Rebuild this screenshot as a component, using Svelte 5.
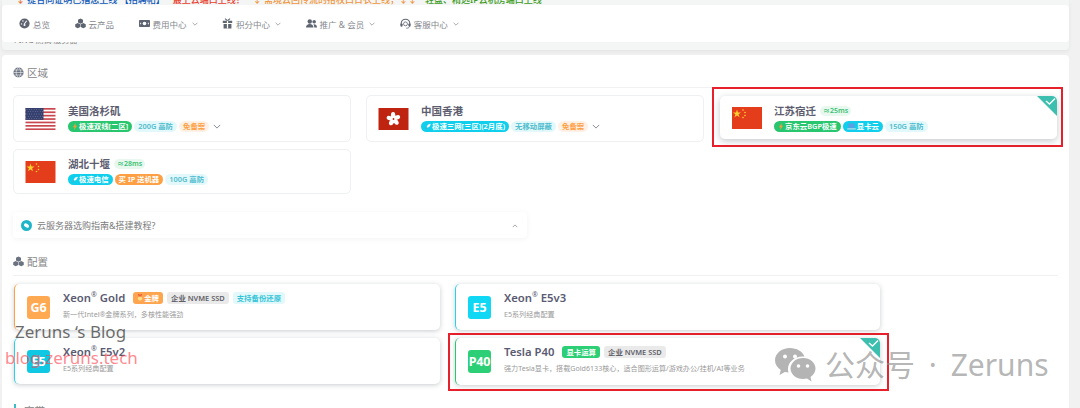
<script>
  const nav = [
    { t: '总览', i: 'dash' },
    { t: '云产品', i: 'cubes' },
    { t: '费用中心', i: 'money', c: true },
    { t: '积分中心', i: 'gift', c: true },
    { t: '推广 & 会员', i: 'users', c: true },
    { t: '客服中心', i: 'head', c: true }
  ];
  const stars = [];
  for (let r = 0; r < 5; r++) for (let c = 0; c < 7; c++) stars.push({ x: 1.5 + c * 2.4 + (r % 2) * 1.2, y: 1.4 + r * 2.3 });
</script>

{#snippet cn()}
  <svg class="flag" viewBox="0 0 30 22"><rect width="30" height="22" fill="#e43d1c"/><polygon points="5,2.5 6,5.500 9,5.500 6.600,7.300 7.500,10.300 5,8.500 2.500,10.300 3.400,7.300 1,5.500 4,5.500" fill="#fbd130"/><circle cx="11" cy="3" r=".8" fill="#fbd130"/><circle cx="13" cy="5.500" r=".8" fill="#fbd130"/><circle cx="13" cy="8.500" r=".8" fill="#fbd130"/><circle cx="11" cy="10.500" r=".8" fill="#fbd130"/></svg>
{/snippet}
{#snippet us()}
  <svg class="flag" viewBox="0 0 30 22"><rect width="30" height="22" fill="#fff"/><g fill="#c9474f"><rect width="30" height="1.700"/><rect y="3.400" width="30" height="1.700"/><rect y="6.800" width="30" height="1.700"/><rect y="10.200" width="30" height="1.700"/><rect y="13.600" width="30" height="1.700"/><rect y="17" width="30" height="1.700"/><rect y="20.400" width="30" height="1.600"/></g><rect width="18" height="11.900" fill="#35406e"/>{#each stars as s}<circle cx={s.x} cy={s.y} r=".4" fill="#9aa3c4"/>{/each}</svg>
{/snippet}
{#snippet hk()}
  <svg class="flag" viewBox="0 0 30 22"><rect width="30" height="22" fill="#bf2411"/><g fill="#fff"><ellipse cx="14.600" cy="7.400" rx="2.200" ry="3.400"/><ellipse cx="14.600" cy="7.400" rx="2.200" ry="3.400" transform="rotate(72 15 11)"/><ellipse cx="14.600" cy="7.400" rx="2.200" ry="3.400" transform="rotate(144 15 11)"/><ellipse cx="14.600" cy="7.400" rx="2.200" ry="3.400" transform="rotate(216 15 11)"/><ellipse cx="14.600" cy="7.400" rx="2.200" ry="3.400" transform="rotate(288 15 11)"/></g><circle cx="15" cy="11" r=".9" fill="#bf2411"/></svg>
{/snippet}
{#snippet chev()}
  <svg class="chev" viewBox="0 0 10 6"><path d="M1 1l4 4 4-4" fill="none" stroke="currentColor" stroke-width="1.100"/></svg>
{/snippet}
{#snippet bolt()}
  <svg class="mini" viewBox="0 0 8 10"><path d="M5 0L1 6h2.200L2.600 10 7 4H4.600z" fill="#f59a3e"/></svg>
{/snippet}
{#snippet rocket()}
  <svg class="mini" viewBox="0 0 10 10"><path d="M9.500.5C6.500.7 4 2.500 2.800 5.500l1.700 1.700C7.500 6 9.300 3.500 9.500.5z" fill="#fff"/><path d="M2.500 6.500L.5 9.500l3-2z" fill="#f0665a"/></svg>
{/snippet}
{#snippet laptop()}
  <svg class="mini wide" viewBox="0 0 10 8"><rect x="1.500" y=".5" width="7" height="5" rx=".5" fill="#5d9fe0"/><rect y="6" width="10" height="1.500" rx=".5" fill="#c6d6e6"/></svg>
{/snippet}
{#snippet medal()}
  <svg class="mini" viewBox="0 0 8 10"><path d="M1 0h2l1 3 1-3h2L5.500 4h-3z" fill="#e8553a"/><circle cx="4" cy="6.500" r="3" fill="#ffe08a"/></svg>
{/snippet}
{#snippet icon(k)}
  <svg class="nicon" viewBox="0 0 14 14" fill="#5e6470">
    {#if k === 'dash'}<circle cx="7" cy="7" r="6.500"/><path d="M6.500 8L9.800 3.500" stroke="#fff" stroke-width="1.300"/><circle cx="3.200" cy="7.500" r=".9" fill="#fff"/><circle cx="5" cy="3.800" r=".9" fill="#fff"/><circle cx="7" cy="9" r="1.300" fill="#fff"/>
    {:else if k === 'cubes'}<path d="M7 .5l3.200 1.600v3.500L7 7.200 3.800 5.600V2.100zM3.500 6.500l3.200 1.600v3.500l-3.200 1.600L.3 11.600V8.100zM10.500 6.500l3.200 1.600v3.500l-3.200 1.600-3.200-1.600V8.100z"/>
    {:else if k === 'money'}<rect x="0" y="2.500" width="14" height="9" rx="1"/><circle cx="7" cy="7" r="2.300" fill="#fff"/><rect x="1.500" y="6" width="1.200" height="2" fill="#fff"/><rect x="11.300" y="6" width="1.200" height="2" fill="#fff"/>
    {:else if k === 'gift'}<path d="M1 3.500h12v3H1zM2 7.500h10v6H2z"/><path d="M3.800.8L7 3.500 10.200.8" fill="none" stroke="#5e6470" stroke-width="1.300"/><path d="M6.200 3.500h1.600v10H6.200z" fill="#fff"/>
    {:else if k === 'users'}<circle cx="4.800" cy="4.500" r="2.800"/><circle cx="10.400" cy="4.800" r="2.300"/><path d="M0 12c0-3 2-4.500 4.800-4.500S9.500 9 9.500 12zM10.500 12c0-1.800-.4-3-1.300-4 2.500-.5 4.800 1 4.800 4z"/>
    {:else}<path d="M1.500 8V7a5.500 5.500 0 0111 0v1" fill="none" stroke="#5e6470" stroke-width="1.300"/><rect x=".5" y="7" width="2.800" height="4" rx="1"/><rect x="10.700" y="7" width="2.800" height="4" rx="1"/><circle cx="7" cy="7.500" r="2.500" fill="none" stroke="#5e6470"/><path d="M12 11c-.5 1.500-2 2-4 2" fill="none" stroke="#5e6470"/>{/if}
  </svg>
{/snippet}
{#snippet corner()}
  <svg class="corner" viewBox="0 0 20 20"><path d="M0 0h17a3 3 0 013 3v17z" fill="#3dbfb0"/><path d="M9 5l3.500 3L18 2.500" fill="none" stroke="#fff" stroke-width="1.300"/></svg>
{/snippet}

<div class="page">
  <div class="topcard">
    <div class="notice">
      <span class="blue"><i class="arrow">↓</i> 提合同证明已指您上线 【招聘帖】</span>
      <span class="red">最上云端口上线！</span>
      <span class="orange">↓ 需境云回传流的拾权口日衣上线，↓↓</span>
      <span class="green">轻盘、精选IP云机房端口上线</span>
    </div>
    <div class="nav">
      {#each nav as n}
        <div class="navitem">{@render icon(n.i)}<span>{n.t}</span>{#if n.c}{@render chev()}{/if}</div>
      {/each}
    </div>
    <div class="under">PING 测试 服务器</div>
  </div>

  <div class="main">
    <div class="sect">
      <svg class="sicon" viewBox="0 0 14 14"><circle cx="7" cy="7" r="6.500" fill="#6b7280"/><path d="M.5 7h13M7 .5c-4 4-4 9 0 13M7 .5c4 4 4 9 0 13M1.500 3.800h11M1.500 10.200h11" fill="none" stroke="#fff" stroke-width=".7"/></svg>
      <span>区域</span>
    </div>

    <div class="regions">
      <div class="rcard">
        {@render us()}
        <div class="rbody">
          <div class="rtitle"><b>美国洛杉矶</b></div>
          <div class="tags">
            <span class="tag tgreen">{@render bolt()}极速双线[二区]</span>
            <span class="tag tcyan">200G 高防</span>
            <span class="tag tpeach">免备案</span>
            <span class="cv">{@render chev()}</span>
          </div>
        </div>
      </div>
      <div class="rcard">
        {@render hk()}
        <div class="rbody">
          <div class="rtitle"><b>中国香港</b></div>
          <div class="tags">
            <span class="tag tblue">{@render rocket()}极速三网[三区](2月底)</span>
            <span class="tag tcyan">无移动屏蔽</span>
            <span class="tag tpeach">免备案</span>
            <span class="cv">{@render chev()}</span>
          </div>
        </div>
      </div>
      <div class="rwrap">
        <div class="rcard active">
          {@render corner()}
          {@render cn()}
          <div class="rbody">
            <div class="rtitle"><b>江苏宿迁</b><span class="ping">≈25ms</span></div>
            <div class="tags">
              <span class="tag tgreen">{@render bolt()}京东云BGP极速</span>
              <span class="tag tblue">{@render laptop()}显卡云</span>
              <span class="tag tcyan">150G 高防</span>
            </div>
          </div>
        </div>
      </div>
      <div class="rcard low">
        {@render cn()}
        <div class="rbody">
          <div class="rtitle"><b>湖北十堰</b><span class="ping">≈28ms</span></div>
          <div class="tags">
            <span class="tag tblue">{@render rocket()}极速电信</span>
            <span class="tag torange">买 IP 送机器</span>
            <span class="tag tcyan">100G 高防</span>
          </div>
        </div>
      </div>
    </div>

    <div class="guide">
      <svg class="gicon" viewBox="0 0 12 12"><circle cx="6" cy="6" r="6" fill="#1fb5c9"/><ellipse cx="6" cy="6" rx="3" ry="2" fill="#fff" transform="rotate(30 6 6)"/></svg>
      <span>云服务器选购指南&amp;搭建教程?</span>
      <svg class="gup" viewBox="0 0 8 5"><path d="M1 4l3-3 3 3" fill="none" stroke="currentColor"/></svg>
    </div>

    <div class="sect second">
      <svg class="sicon" viewBox="0 0 14 14"><path d="M7 .5l3.200 1.600v3.500L7 7.200 3.800 5.600V2.100zM3.500 6.500l3.200 1.600v3.500l-3.200 1.600L.3 11.600V8.100zM10.500 6.500l3.200 1.600v3.500l-3.200 1.600-3.200-1.600V8.100z" fill="#6b7280"/></svg>
      <span>配置</span>
    </div>

    <div class="configs">
      <div class="ccard borange">
        <div class="badge orange-bg">G6</div>
        <div class="cbody">
          <div class="ctitle"><b>Xeon<sup>®</sup> Gold</b><span class="ct corange">{@render medal()}金牌</span><span class="ct cgrey">企业 NVME SSD</span><span class="ct ccyan">支持备份还原</span></div>
          <div class="cdesc">新一代Intel®金牌系列，多核性能强劲</div>
        </div>
      </div>
      <div class="ccard bcyan">
        <div class="badge cyan-bg">E5</div>
        <div class="cbody">
          <div class="ctitle"><b>Xeon<sup>®</sup> E5v3</b></div>
          <div class="cdesc">E5系列经典配置</div>
        </div>
      </div>
      <div class="ccard bcyan">
        <div class="badge cyan2-bg">E5</div>
        <div class="cbody">
          <div class="ctitle"><b>Xeon<sup>®</sup> E5v2</b></div>
          <div class="cdesc">E5系列经典配置</div>
        </div>
      </div>
      <div class="redbox">
        <div class="ccard bgreen sel">
          {@render corner()}
          <div class="badge green-bg">P40</div>
          <div class="cbody">
            <div class="ctitle"><b>Tesla P40</b><span class="ct cgreen">显卡运算</span><span class="ct cgrey">企业 NVME SSD</span></div>
            <div class="cdesc">强力Tesla显卡，搭载Gold6133核心，适合图形运算/游戏办公/挂机/AI等业务</div>
          </div>
        </div>
      </div>
    </div>

    <div class="third"><span>宽带</span></div>
  </div>

  <div class="wm1">Zeruns ‘s Blog</div>
  <div class="wm2">blog.zeruns.tech</div>
  <div class="wm3">
    <svg class="wechat" viewBox="0 0 42 36"><path d="M16 1C7.700 1 1 6.500 1 13.300c0 4 2.300 7.500 5.800 9.700L5.500 28l5.300-3c1.200.3 2.500.5 3.800.6C14 24 14 23 14 22c0-7 6.500-12.500 14.500-12.500h2C28.500 4.500 22.800 1 16 1z" fill="#b4b4b4"/><path d="M29 11c-7 0-12.500 4.700-12.500 10.500S22 32 29 32c1.400 0 2.700-.2 4-.5l4.500 3-1-4.600c3-2 5-5 5-8.400C41.500 15.700 36 11 29 11z" fill="#b4b4b4"/><circle cx="11" cy="9.500" r="2" fill="#fff"/><circle cx="21" cy="9.500" r="2" fill="#fff"/><circle cx="24.500" cy="19" r="1.800" fill="#fff"/><circle cx="33.500" cy="19" r="1.800" fill="#fff"/></svg>
    <span>公众号 · Zeruns</span>
  </div>
</div>

<style>
  :global(body) { margin: 0; background: #f1f1f1; }
  .page { width: 1080px; height: 408px; position: relative; overflow: hidden; font-family: "Noto Sans", "Noto Sans CJK SC", sans-serif; color: #5b5b6e; background: #f1f1f1; }
  .topcard { height: 50px; width: 1067px; margin-left: 2px; overflow: hidden; background: #f4f5f5; position: relative; border-radius: 0 0 4px 4px; box-shadow: 0 2px 4px rgba(0, 0, 0, .05); }
  .notice { position: absolute; top: -7px; left: 14px; font-size: 9px; font-weight: 500; white-space: nowrap; display: flex; gap: 8px; }
  .arrow { font-style: normal; color: #e8702e; }
  .blue { color: #0b57b8; } .red { color: #e8402e; } .orange { color: #f0953a; } .green { color: #3a9b20; }
  .nav { position: absolute; top: 5px; left: 0; right: 0; height: 37px; background: #fff; border-radius: 4px; display: flex; align-items: center; padding-left: 17px; box-sizing: border-box; z-index: 1; }
  .navitem { display: flex; align-items: center; font-size: 8.500px; color: #85888e; margin-right: 24.500px; white-space: nowrap; }
  .nicon { width: 11px; height: 11px; margin-right: 3px; }
  .chev { width: 6px; height: 4px; margin-left: 5px; color: #7a7e86; }
  .under { position: absolute; top: 34px; left: 12px; font-size: 8px; color: #8a8a8a; white-space: nowrap; }

  .main { position: absolute; left: 2px; top: 55px; width: 1067px; height: 360px; background: #fff; border-radius: 4px 4px 0 0; padding: 0 11px; box-sizing: border-box; }
  .sect { display: flex; align-items: center; height: 33px; padding-top: 3px; box-sizing: border-box; gap: 3px; font-size: 10.500px; color: #868686; border-bottom: 1px solid #f1f1f1; }
  .sicon { width: 11px; height: 11px; }
  .regions { display: grid; grid-template-columns: 338px 338px 338px; column-gap: 15px; row-gap: 7px; position: relative; margin-top: 7px; }
  .rcard { height: 47px; border: 1px solid #eef0f1; border-radius: 5px; display: flex; align-items: center; padding-left: 11px; background: #fff; position: relative; box-sizing: border-box; }
  .low { height: 45px; }
  .flag { width: 31px; height: 22px; flex: none; }
  .rbody { margin-left: 12px; margin-top: -2px; display: flex; flex-direction: column; gap: 3px; }
  .rtitle { display: flex; align-items: center; gap: 4px; height: 15px; }
  .rtitle b { font-size: 10.500px; font-weight: 600; color: #5d5d70; white-space: nowrap; }
  .ping { font-size: 7px; font-weight: 600; color: #38c172; background: #e9f8ef; border-radius: 5px; padding: 0 3px; line-height: 10px; }
  .tags { display: flex; align-items: center; gap: 2px; height: 11px; }
  .tag { font-size: 7.400px; line-height: 11px; height: 11px; padding: 0 4px; border-radius: 6px; white-space: nowrap; font-weight: 600; display: inline-flex; align-items: center; }
  .mini { width: 6px; height: 7px; margin-right: 1px; flex: none; }
  .wide { width: 9px; }
  .tgreen { background: #28c76f; color: #fff; }
  .tblue { background: #0fcfec; color: #fff; }
  .torange { background: #ff9f43; color: #fff; }
  .tcyan { background: #e3f8fb; color: #4fbccd; }
  .tpeach { background: #fff1e6; color: #ff9f43; }
  .cv { color: #888; display: inline-flex; margin-left: 2px; }
  .cv .chev { margin: 0; width: 8px; height: 5px; }
  .rwrap { grid-column: 3; grid-row: 1 / span 2; align-self: start; border: 2px solid #e8202b; height: 60px; margin-top: -8px; padding: 7px 4px 0 6px; box-sizing: border-box; margin-left: -7px; width: 351px; }
  .active { border: 0; border-radius: 5px; box-shadow: 0 2px 7px rgba(60, 70, 80, .3); height: 43px; padding-left: 12px; overflow: hidden; }
  .active .flag { width: 30px; }
  .active .rbody { margin-top: 0; }
  .corner { position: absolute; top: 0; right: 0; width: 20px; height: 20px; z-index: 1; }

  .guide { margin-top: 18px; width: 514px; height: 26px; box-sizing: border-box; border-radius: 4px; box-shadow: 0 1px 6px rgba(0, 0, 0, .05); display: flex; align-items: center; padding-left: 8px; gap: 5px; font-size: 9px; color: #7b7b7b; background: #fff; position: relative; }
  .gicon { width: 11px; height: 11px; }
  .gup { position: absolute; right: 9px; top: 12px; width: 6px; height: 4px; color: #888; }
  .second { margin-top: 10px; height: 28px; padding-top: 0; }

  .configs { display: grid; grid-template-columns: 426px 425px; column-gap: 15px; row-gap: 8px; margin: 8px 0 0 1px; position: relative; }
  .ccard { height: 46px; background: #fff; border-radius: 5px; border-left: 1.500px solid #ccc; box-shadow: 0 1px 5px rgba(60, 70, 80, .28); display: flex; align-items: center; padding-left: 12px; box-sizing: border-box; position: relative; overflow: hidden; }
  .borange { border-left-color: #ff9f43; } .bcyan { border-left-color: #2ad0e8; } .bgreen { border-left-color: #28c76f; }
  .sel { height: 47px; }
  .badge { width: 23px; height: 23px; border-radius: 3px; color: #fff; font-size: 12.500px; font-weight: 700; letter-spacing: -.2px; display: flex; align-items: center; justify-content: center; flex: none; }
  .orange-bg { background: #ffa953; } .cyan-bg { background: #10d8f4; } .cyan2-bg { background: #10c8e4; } .green-bg { background: #2ccf76; }
  .cbody { margin-left: 13px; align-self: flex-start; margin-top: 6px; }
  .ctitle { display: flex; align-items: center; gap: 4px; height: 15px; white-space: nowrap; }
  .ctitle b { font-size: 11.300px; font-weight: 600; color: #5a5a72; margin-right: 4px; }
  sup { font-size: 7px; font-weight: 400; line-height: 0; }
  .ct { font-size: 7.400px; font-weight: 600; height: 12px; line-height: 12px; padding: 0 4px; border-radius: 3px; display: inline-flex; align-items: center; }
  .corange { background: #ffa54f; color: #fff; } .cgrey { background: #eaeaea; color: #5f6068; } .ccyan { background: #e3f8fb; color: #34c4d8; } .cgreen { background: #2ccf76; color: #fff; }
  .cdesc { font-size: 7.100px; color: #9a9a9a; margin-top: 3.500px; white-space: nowrap; line-height: 10px; }
  .redbox { border: 2px solid #e8202b; margin: -5px -9px -7px -7px; padding: 3px 7px 4px 5px; box-sizing: border-box; height: 58px; }
  .third { margin-top: 20px; height: 14px; border-left: 2px solid #3bbccb; padding-left: 8px; font-size: 10.500px; line-height: 14px; color: #868686; margin-left: 1px; }

  .wm1 { position: absolute; left: 15px; top: 320px; font-size: 17px; color: rgba(60, 60, 60, .75); white-space: nowrap; }
  .wm2 { position: absolute; left: 5px; top: 346px; font-size: 17px; color: rgba(255, 70, 80, .65); white-space: nowrap; }
  .wm3 { position: absolute; left: 774px; top: 347px; display: flex; align-items: center; gap: 9px; color: rgba(140, 140, 140, .65); font-size: 30px; word-spacing: 6px; white-space: nowrap; line-height: 36px; }
  .wechat { width: 42px; height: 36px; }
</style>
